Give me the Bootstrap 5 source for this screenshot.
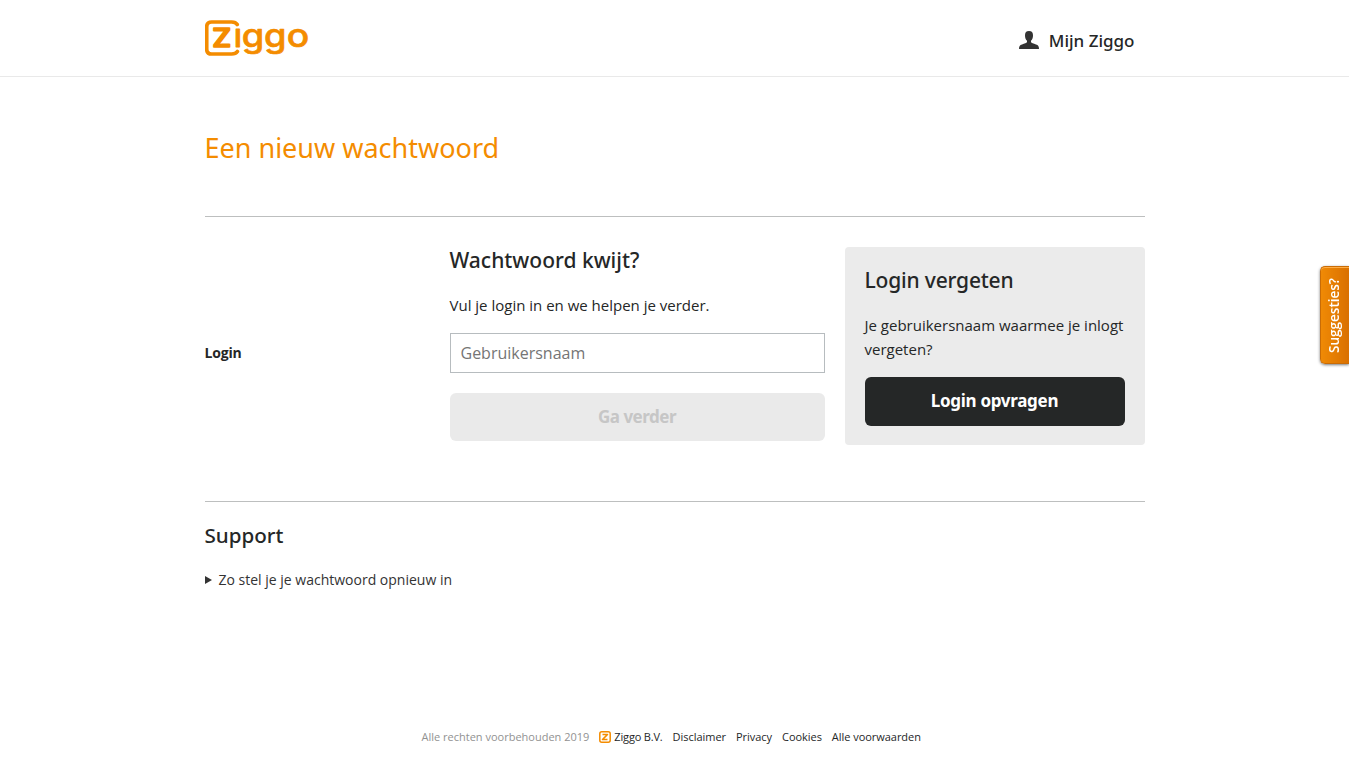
<!DOCTYPE html>
<html lang="nl">
<head>
<meta charset="utf-8">
<meta name="viewport" content="width=device-width, initial-scale=1">
<title>Een nieuw wachtwoord - Ziggo</title>
<link href="https://cdn.jsdelivr.net/npm/bootstrap@5.3.0/dist/css/bootstrap.min.css" rel="stylesheet">
<style>
body{font-family:"Open Sans","Noto Sans",sans-serif;color:#252727;font-size:15px;line-height:24px;height:762px;overflow:hidden}
.wrap{width:940px;margin:0 auto}
.site-head{height:77px;border-bottom:1px solid #e9e9e9}
h1,h2,.display-font{font-family:"Noto Sans","Open Sans",sans-serif;margin:0;white-space:nowrap}
h1{font-size:27px;line-height:36px;color:#f48c00;font-weight:400}
h2{font-size:21px;line-height:28px;font-weight:500}
.title-row{height:140px;padding-top:53px;border-bottom:1px solid #bdbfbf}
.form-row{height:285px;padding-top:30px;border-bottom:1px solid #bdbfbf}
.form-row h2{line-height:26px}
.mijn{font-size:17px;font-weight:500;height:81px;padding-right:10px}
.mijn svg{margin:0 10px 1px 0}
.label-col{width:245px;padding-top:94px;font-size:14px;font-weight:700;letter-spacing:-.2px}
.form-col{width:375px}
.form-col h2{margin-bottom:20px}
.user-input{height:40px;border-radius:0;border-color:#b7bcbf;padding:0 10px;font-size:16px}
.user-input::placeholder{color:#757575}
.action{height:48px;border:0;border-radius:6px;font-size:17px;font-weight:700;padding:0}
.action.go,.action.go:disabled{background:#eaeaea;color:#c6c6c6;opacity:1;margin-top:20px;letter-spacing:-.5px}
.action.ask{background:#252727;color:#fff;height:49px;letter-spacing:-.3px;padding-bottom:2px}
.side{width:300px;height:198px;background:#ebebeb;border-radius:4px;padding:20px}
.side h2{letter-spacing:-.18px}
.side p{margin:20px 0 16px}
.side p,.form-col p{white-space:nowrap}
.support{padding-top:20px}
.support h2{line-height:26px;font-size:20.6px}
.support-link{font-size:14px;color:#333;margin-top:20px}
.support-link svg{margin-right:7px}
.foot{font-size:11px;line-height:16px;padding-left:217px;margin-top:137px;gap:10px}
.foot a{color:#252727;letter-spacing:-.04px}
.foot .brand{letter-spacing:-.17px}
.foot svg{margin-right:3px}
.foot .rights{color:#929292}
.suggest{right:0;top:266px;width:29px;height:98px;background:linear-gradient(90deg,#f08a05,#d97000);border:1px solid #c96c06;border-right:0;border-radius:5px 0 0 5px;box-shadow:inset 0 1px #ffad45,0 1px 3px #0008}
.suggest span{writing-mode:vertical-rl;transform:rotate(180deg);color:#fff;font-size:13.500px;font-weight:600;line-height:16px;white-space:nowrap;margin-right:2px}
</style>
</head>
<body>
<header class="site-head">
  <div class="wrap d-flex justify-content-between">
    <a href="#" class="d-block" aria-label="Ziggo"><svg class="d-block" width="112" height="62" viewBox="205.300 0 112 62">
      <path d="M237.500 24.500Q236 22 232 22H212Q207 22 207 27V49Q207 54 212 54H232Q236 54 237.700 51.500" fill="none" stroke="#f48c00" stroke-width="3.700" stroke-linecap="round"/>
      <g fill="#f48c00" stroke="#f48c00" stroke-linejoin="round" font-family="Inter, sans-serif" font-weight="500">
        <text x="212.500" y="46.500" font-size="25" font-weight="600" stroke-width="1.400" textLength="19" lengthAdjust="spacingAndGlyphs">Z</text>
        <text x="234" y="46.500" font-size="33" stroke-width=".8">ı</text>
        <text x="242" y="46.500" font-size="32.500" stroke-width=".6" textLength="22.500" lengthAdjust="spacingAndGlyphs">g</text>
        <text x="264.400" y="46.500" font-size="32.500" stroke-width=".6" textLength="22.500" lengthAdjust="spacingAndGlyphs">g</text>
        <text x="287" y="46.500" font-size="32.500" stroke-width=".6" textLength="22.500" lengthAdjust="spacingAndGlyphs">o</text>
      </g></svg></a>
    <a href="#" class="display-font d-flex align-items-center text-decoration-none text-reset mijn"><svg width="20" height="18" viewBox="0 0 20 18"><path fill="#333" d="M10 0C7.200 0 6 1.500 6 4.200c0 2.300.6 4.200 2 5.600v1.300c-.3 1.200-2.500 1.500-5 2.300C.8 14.100 0 15 0 18h20c0-3-.8-3.900-3-4.600-2.500-.8-4.700-1.100-5-2.300V9.800c1.400-1.400 2-3.300 2-5.600C14 1.500 12.800 0 10 0z"/></svg><span>Mijn Ziggo</span></a>
  </div>
</header>
<main class="wrap">
  <div class="title-row"><h1>Een nieuw wachtwoord</h1></div>
  <div class="form-row d-flex">
    <label class="label-col" for="user">Login</label>
    <div class="form-col">
      <h2>Wachtwoord kwijt?</h2>
      <p class="mb-3">Vul je login in en we helpen je verder.</p>
      <input id="user" class="form-control user-input" placeholder="Gebruikersnaam">
      <button class="btn action go display-font w-100 d-block" disabled>Ga verder</button>
    </div>
    <aside class="side ms-auto">
      <h2>Login vergeten</h2>
      <p>Je gebruikersnaam waarmee je inlogt<br>vergeten?</p>
      <button class="btn action ask display-font w-100">Login opvragen</button>
    </aside>
  </div>
  <section class="support">
    <h2>Support</h2>
    <a href="#" class="support-link d-flex align-items-center text-decoration-none"><svg width="7" height="8" viewBox="0 0 7 8"><path fill="#333" d="M0 0 7 4 0 8z"/></svg>Zo stel je je wachtwoord opnieuw in</a>
  </section>
  <footer class="foot d-flex text-nowrap">
    <span class="rights">Alle rechten voorbehouden 2019</span>
    <a href="#" class="brand text-decoration-none d-flex align-items-center"><svg width="12" height="12" viewBox="0 0 12 12"><rect x=".8" y=".8" width="10.400" height="10.400" rx="2" fill="none" stroke="#f48c00" stroke-width="1.500"/><path d="M3.500 3.500h5l-5 5h5" fill="none" stroke="#f48c00" stroke-width="1.600" stroke-linejoin="round"/></svg>Ziggo B.V.</a>
    <a href="#" class="text-decoration-none">Disclaimer</a>
    <a href="#" class="text-decoration-none">Privacy</a>
    <a href="#" class="text-decoration-none">Cookies</a>
    <a href="#" class="text-decoration-none">Alle voorwaarden</a>
  </footer>
</main>
<a href="#" class="suggest position-fixed d-flex align-items-center justify-content-center text-decoration-none"><span>Suggesties?</span></a>
<script src="https://cdn.jsdelivr.net/npm/bootstrap@5.3.0/dist/js/bootstrap.bundle.min.js"></script>
</body>
</html>
